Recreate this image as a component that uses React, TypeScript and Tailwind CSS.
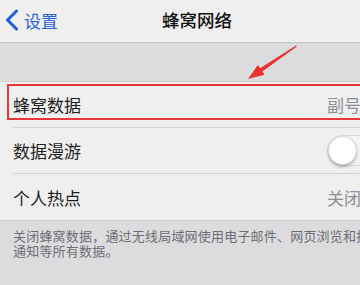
import React from "react";

const font = { fontFamily: '"Noto Sans CJK SC", "Noto Sans", sans-serif' };

function Toggle() {
  return (
    <div className="relative w-[51px] h-[31px] rounded-full bg-[#f4f4f4] border border-[#d9d9d9]">
      <div className="absolute left-0 top-0 w-[29px] h-[29px] rounded-full bg-white shadow-[0_2px_3px_rgba(0,0,0,0.25)] border border-[#d6d6d6]" />
    </div>
  );
}

function Row({
  label,
  right,
  last,
}: {
  label: string;
  right: React.ReactNode;
  last?: boolean;
}) {
  return (
    <div className="pl-[13px] bg-[#efefef]">
      <div
        className={
          "grid grid-cols-[314px_1fr] items-center h-[46px] " +
          (last ? "" : "border-b border-[#d2d2d4]")
        }
      >
        <span className="text-[17px] text-[#1d1d1d] leading-none">{label}</span>
        <div className="flex items-center">{right}</div>
      </div>
    </div>
  );
}

export default function App() {
  return (
    <div
      className="relative w-[360px] h-[285px] overflow-hidden bg-[#dcdcdf]"
      style={font}
    >
      {/* nav bar */}
      <div className="flex items-center h-[43px] bg-[#efefef] border-b border-[#c6c6c8]">
        <div className="flex items-center w-[162px] pl-[5px] pb-[2px]">
          <svg width="14" height="22" viewBox="0 0 14 22">
            <polyline
              points="11.5,2 2.5,11 11.5,20"
              fill="none"
              stroke="#1d5fd8"
              strokeWidth="3"
              strokeLinecap="round"
              strokeLinejoin="round"
            />
          </svg>
          <span className="ml-[5px] text-[17px] text-[#2b63d6] leading-none">设置</span>
        </div>
        <span className="text-[17.5px] font-medium text-[#111] leading-none pb-[2px]">蜂窝网络</span>
      </div>

      <div className="h-[38px]" />

      {/* cellular group */}
      <div className="border-t border-b border-[#cfcfd1]">
        <Row
          label="蜂窝数据"
          right={<span className="text-[17px] text-[#8e8e93] leading-none whitespace-nowrap">副号</span>}
        />
        <Row label="数据漫游" right={<div className="mr-[-20px]"><Toggle /></div>} />
        <Row
          label="个人热点"
          right={<span className="text-[17px] text-[#8e8e93] leading-none whitespace-nowrap">关闭</span>}
          last
        />
      </div>

      {/* footer note */}
      <div className="pl-[13px] pt-[7px] w-[420px] text-[13px] tracking-[0.2px] leading-[15px] text-[#6d6d72] whitespace-nowrap">
        关闭蜂窝数据，通过无线局域网使用电子邮件、网页浏览和推送
        <br />
        通知等所有数据。
      </div>

      {/* annotation: red box and arrow */}
      <div className="absolute left-[7px] top-[84px] h-[36px] w-[370px] border-2 border-[#e8363a]" />
      <svg className="absolute left-0 top-0" width="360" height="285" viewBox="0 0 360 285">
        <polygon
          points="248,79 257.8,65 260.1,68.3 296,45.4 296.8,46.6 262.3,71.5 264.6,74.8"
          fill="#e8332f"
        />
      </svg>
    </div>
  );
}
